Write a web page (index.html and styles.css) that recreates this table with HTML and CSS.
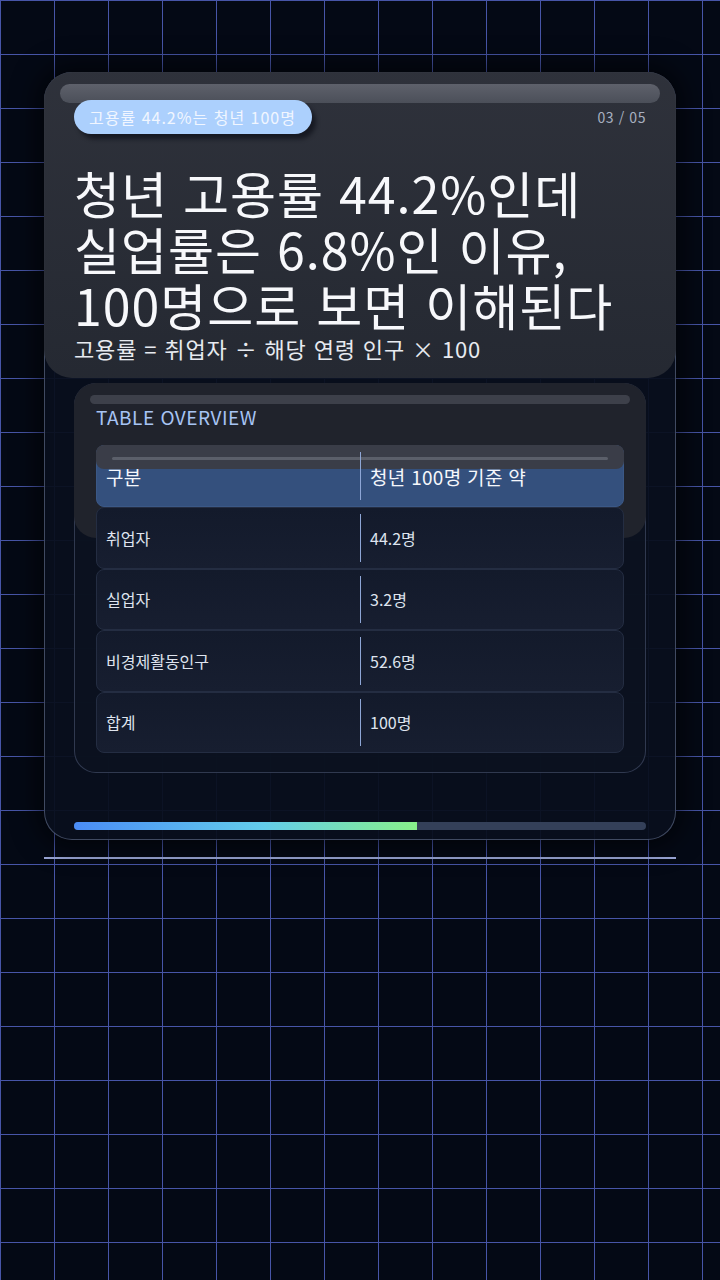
FILE: index.html
```html
<!DOCTYPE html>
<html lang="ko">
<head>
<meta charset="utf-8">
<link rel="stylesheet" href="styles.css">
</head>
<body>
<div class="stage">
  <article class="card">
    <div class="card-top">
      <span class="pill">고용률 44.2%는 청년 100명</span>
      <span class="counter">03 / 05</span>
    </div>
    <h1 class="title">청년 고용률 44.2%인데<br>실업률은 6.8%인 이유,<br>100명으로 보면 이해된다</h1>
    <p class="formula">고용률 = 취업자 ÷ 해당 연령 인구 × 100</p>
    <section class="table-card">
      <h2 class="table-title">TABLE OVERVIEW</h2>
      <div class="table">
        <div class="row head"><div class="cell">구분</div><div class="cell split">청년 100명 기준 약</div></div>
        <div class="row"><div class="cell">취업자</div><div class="cell split">44.2명</div></div>
        <div class="row"><div class="cell">실업자</div><div class="cell split">3.2명</div></div>
        <div class="row"><div class="cell">비경제활동인구</div><div class="cell split">52.6명</div></div>
        <div class="row"><div class="cell">합계</div><div class="cell split">100명</div></div>
      </div>
    </section>
    <div class="progress"><div class="progress-fill" style="width:60%"></div></div>
  </article>
  <div class="rule"></div>
</div>
</body>
</html>
```
FILE: styles.css
```css
html, body {
  margin: 0;
  padding: 0;
}
body {
  width: 720px;
  height: 1280px;
  background-color: #040915;
  background-image:
    linear-gradient(to right, #4755a8 1px, transparent 1px),
    linear-gradient(to bottom, #4755a8 1px, transparent 1px);
  background-size: 54px 54px;
  font-family: "Noto Sans CJK KR", "Noto Sans", sans-serif;
  color: #f2f4f8;
  overflow: hidden;
}
.stage {
  padding: 72px 44px 0;
}
.card {
  position: relative;
  height: 768px;
  box-sizing: border-box;
  border: 1px solid rgba(120, 134, 168, 0.5);
  border-radius: 28px;
  background: rgba(9, 15, 29, 0.94);
  box-shadow: 0 0 24px 8px rgba(0, 0, 0, 0.55);
  padding: 27px 29px 0;
  display: flex;
  flex-direction: column;
}
.card::before {
  content: "";
  position: absolute;
  left: -1px;
  right: -1px;
  top: -1px;
  height: 40%;
  border-radius: 28px;
  background: linear-gradient(#30333c, #262a33);
  opacity: 0.96;
}
.card::after {
  content: "";
  position: absolute;
  left: 15px;
  right: 15px;
  top: 11px;
  height: 19px;
  border-radius: 10px;
  background: linear-gradient(#5e616b, #4b4f59);
}
.card > * {
  position: relative;
  z-index: 1;
}
.card-top {
  display: flex;
  align-items: center;
  justify-content: space-between;
  height: 34px;
}
.pill {
  display: inline-flex;
  align-items: center;
  height: 34px;
  padding: 0 16px 0 15px;
  border-radius: 17px;
  background: #acd0fd;
  color: #f1f6ff;
  font-size: 16px;
  letter-spacing: 1px;
  box-shadow: 4px 5px 4px rgba(5, 8, 16, 0.55);
}
.counter {
  font-size: 14px;
  color: #a8b0c0;
  letter-spacing: 0.6px;
}
.title {
  margin: 30px 0 0;
  font-size: 50px;
  line-height: 56px;
  font-weight: 400;
  color: #f7f8fb;
  letter-spacing: 1px;
}
.formula {
  margin: 1px 0 0;
  font-size: 22px;
  line-height: 30px;
  color: #e7eaf0;
  letter-spacing: 0.85px;
}
.table-card {
  position: relative;
  margin-top: 20px;
  height: 390px;
  box-sizing: border-box;
  border: 1px solid rgba(110, 124, 160, 0.38);
  border-radius: 22px;
  background: rgba(12, 18, 32, 0.95);
  padding: 21px 21px 0;
}
.table-card::before {
  content: "";
  position: absolute;
  left: -1px;
  right: -1px;
  top: -1px;
  height: 40%;
  border-radius: 22px;
  background: #20232c;
}
.table-card::after {
  content: "";
  position: absolute;
  left: 15px;
  right: 15px;
  top: 11px;
  height: 9px;
  border-radius: 5px;
  background: #3d404a;
}
.table-card > * {
  position: relative;
  z-index: 1;
}
.table-title {
  margin: 0;
  font-size: 19px;
  line-height: 24px;
  font-weight: 400;
  color: #a7c4f4;
  letter-spacing: 0.5px;
}
.table {
  margin-top: 16px;
  display: flex;
  flex-direction: column;
}
.row {
  position: relative;
  display: grid;
  grid-template-columns: 1fr 1fr;
  height: 61.5px;
  box-sizing: border-box;
  padding: 6px 0;
  border: 1px solid #242d42;
  border-radius: 8px;
  background: linear-gradient(#131a2b, #171e30);
  font-size: 16px;
  color: #dfe4ee;
}
.row.head {
  height: 62px;
  background: #34507d;
  border-color: #3b5886;
  font-size: 19px;
  letter-spacing: 0.3px;
  color: #f5f7fb;
}
.row.head::before {
  content: "";
  position: absolute;
  left: -1px;
  right: -1px;
  top: -1px;
  height: 40%;
  border-radius: 8px;
  background: #3a3d48;
}
.row.head::after {
  content: "";
  position: absolute;
  left: 15px;
  right: 15px;
  top: 11px;
  height: 3px;
  border-radius: 2px;
  background: #5b5f6a;
}
.cell {
  position: relative;
  z-index: 1;
  display: flex;
  align-items: center;
  padding-left: 9px;
}
.cell.split {
  border-left: 1px solid #8ea6d6;
  padding-left: 9px;
}
.progress {
  margin-top: 49px;
  height: 8px;
  border-radius: 4px;
  background: #344059;
  overflow: hidden;
}
.progress-fill {
  height: 100%;
  background: linear-gradient(90deg, #4a8cf6, #63cdeb 55%, #88f08a);
}
.rule {
  margin-top: 17px;
  height: 2px;
  background: #9ba7d8;
}
```
